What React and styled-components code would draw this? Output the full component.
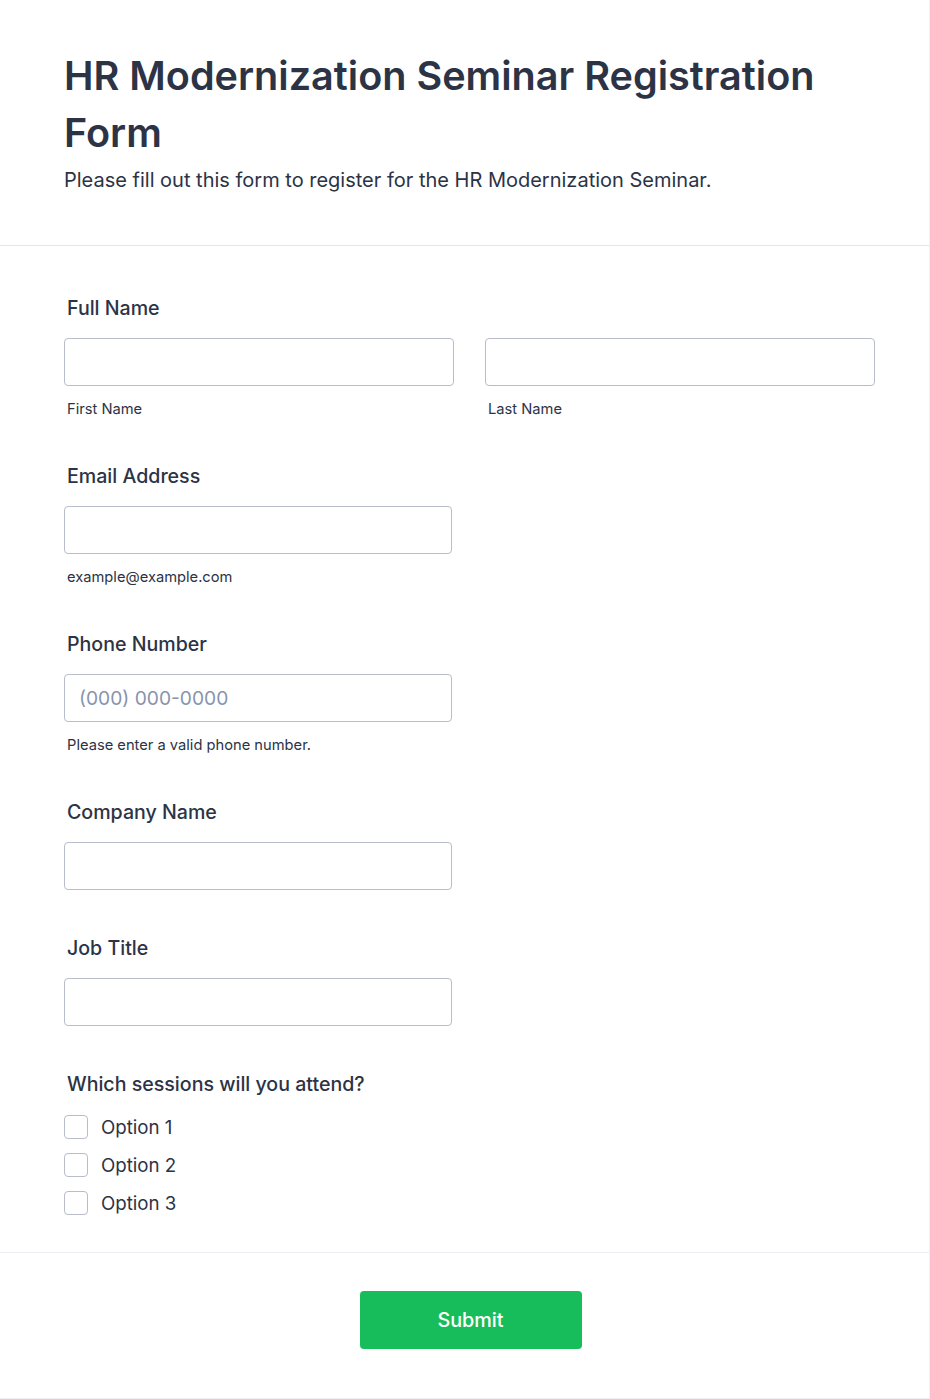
import React from "react";
import styled, { createGlobalStyle } from "styled-components";

const GlobalStyle = createGlobalStyle`
  * { box-sizing: border-box; }
  body {
    margin: 0;
    background: #ffffff;
    font-family: Inter, "Noto Sans", sans-serif;
    color: #2c3345;
  }
`;

const Page = styled.div`
  width: 930px;
  height: 1399px;
  background: #fff;
  border-right: 1px solid #f0f1f5;
  border-bottom: 1px solid #f0f1f5;
`;

const Header = styled.header`
  padding: 48px 64px 51px;
  border-bottom: 1px solid #e1e4ea;
`;

const Title = styled.h1`
  margin: 0;
  font-size: 39.6px;
  line-height: 57px;
  font-weight: 600;
  color: #2c3345;
`;

const Subtitle = styled.p`
  margin: 4px 0 0;
  font-size: 20px;
  line-height: 28px;
  color: #2c3345;
`;

const Body = styled.section`
  padding: 48px 64px 30px;
  border-bottom: 1px solid #eceef4;
`;

const Field = styled.div`
  padding-bottom: ${(p) => (p.$last ? 0 : 44)}px;
`;

const Label = styled.div`
  padding-left: 3px;
  font-size: 19.6px;
  line-height: 28px;
  font-weight: 500;
  color: #2c3345;
  margin-bottom: ${(p) => p.$gap || 16}px;
`;

const Row = styled.div`
  display: grid;
  grid-template-columns: 390px 390px;
  column-gap: 31px;
`;

const Input = styled.input`
  display: block;
  width: ${(p) => p.$width || 388}px;
  height: 48px;
  padding: 0 14px;
  border: 1px solid #b8bdc9;
  border-radius: 4px;
  background: #fff;
  font-family: Inter, sans-serif;
  font-size: 19.2px;
  color: #2c3345;
  outline: none;
  &::placeholder {
    color: #8894ab;
  }
`;

const Sublabel = styled.div`
  margin-top: 14px;
  padding-left: 3px;
  font-size: 14.7px;
  line-height: 18px;
  color: #2c3345;
`;

const Options = styled.div`
  display: flex;
  flex-direction: column;
`;

const Option = styled.label`
  display: flex;
  align-items: center;
  gap: 13px;
  height: 38px;
  font-size: 18.7px;
  color: #2c3345;
`;

const Box = styled.span`
  width: 24px;
  height: 24px;
  border: 1px solid #b8bdc9;
  border-radius: 4px;
  background: #fff;
`;

const Footer = styled.div`
  display: flex;
  justify-content: center;
  padding: 38px 0 0 12px;
`;

const SubmitButton = styled.button`
  width: 222px;
  height: 58px;
  border: 0;
  border-radius: 4px;
  background: #18bd5b;
  color: #fff;
  font-family: Inter, sans-serif;
  font-size: 19.8px;
  font-weight: 500;
`;

const TextField = ({ label, sub, placeholder, last }) => (
  <Field $last={last}>
    <Label>{label}</Label>
    <Input placeholder={placeholder} />
    {sub && <Sublabel>{sub}</Sublabel>}
  </Field>
);

export default function App() {
  return (
    <>
      <GlobalStyle />
      <Page>
        <Header>
          <Title>HR Modernization Seminar Registration Form</Title>
          <Subtitle>
            Please fill out this form to register for the HR Modernization Seminar.
          </Subtitle>
        </Header>
        <Body>
          <Field>
            <Label>Full Name</Label>
            <Row>
              <div>
                <Input $width={390} />
                <Sublabel>First Name</Sublabel>
              </div>
              <div>
                <Input $width={390} />
                <Sublabel>Last Name</Sublabel>
              </div>
            </Row>
          </Field>
          <TextField label="Email Address" sub="example@example.com" />
          <TextField
            label="Phone Number"
            sub="Please enter a valid phone number."
            placeholder="(000) 000-0000"
          />
          <TextField label="Company Name" />
          <TextField label="Job Title" />
          <Field $last>
            <Label $gap={10}>Which sessions will you attend?</Label>
            <Options>
              {["Option 1", "Option 2", "Option 3"].map((o) => (
                <Option key={o}>
                  <Box />
                  {o}
                </Option>
              ))}
            </Options>
          </Field>
        </Body>
        <Footer>
          <SubmitButton>Submit</SubmitButton>
        </Footer>
      </Page>
    </>
  );
}
